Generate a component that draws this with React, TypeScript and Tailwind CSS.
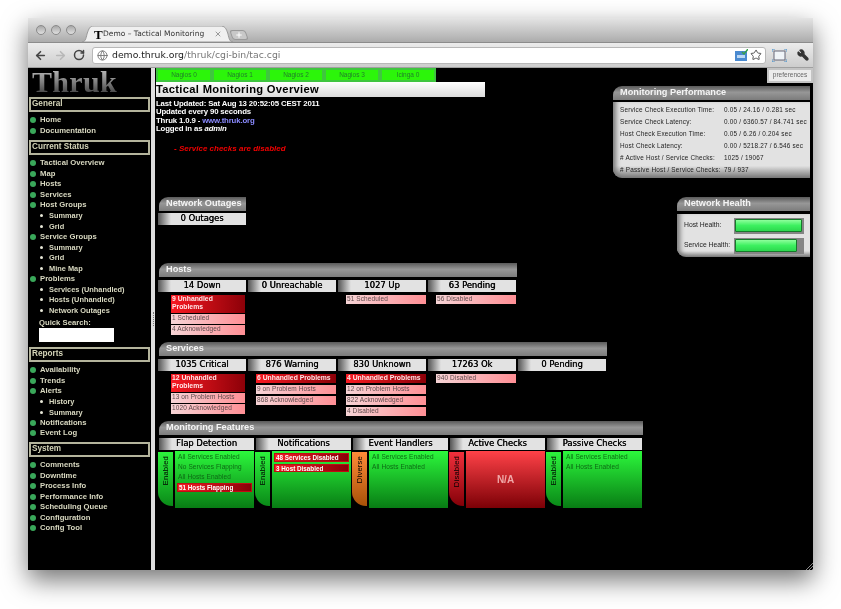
import React from "react";
import { ArrowLeft, ArrowRight, RotateCw, Globe, Star, Wrench, X, Plus } from "lucide-react";

const SANS = "font-['Liberation_Sans',Arial,sans-serif]";

type Item = { t: string; sub?: boolean };
const nav: { title: string; items: Item[]; search?: boolean; gap: string }[] = [
  { title: "General", gap: "h-[43px]", items: [{ t: "Home" }, { t: "Documentation" }] },
  {
    title: "Current Status",
    gap: "h-[207px]",
    search: true,
    items: [
      { t: "Tactical Overview" }, { t: "Map" }, { t: "Hosts" }, { t: "Services" }, { t: "Host Groups" },
      { t: "Summary", sub: true }, { t: "Grid", sub: true }, { t: "Service Groups" }, { t: "Summary", sub: true },
      { t: "Grid", sub: true }, { t: "Mine Map", sub: true }, { t: "Problems" }, { t: "Services (Unhandled)", sub: true },
      { t: "Hosts (Unhandled)", sub: true }, { t: "Network Outages", sub: true },
    ],
  },
  {
    title: "Reports",
    gap: "h-[95px]",
    items: [
      { t: "Availability" }, { t: "Trends" }, { t: "Alerts" }, { t: "History", sub: true }, { t: "Summary", sub: true },
      { t: "Notifications" }, { t: "Event Log" },
    ],
  },
  {
    title: "System",
    gap: "h-[95px]",
    items: [
      { t: "Comments" }, { t: "Downtime" }, { t: "Process Info" }, { t: "Performance Info" }, { t: "Scheduling Queue" },
      { t: "Configuration" }, { t: "Config Tool" },
    ],
  },
];

function Sidebar() {
  return (
    <aside className={`w-[123px] shrink-0 bg-black flex flex-col ${SANS}`}>
      <div className="h-[29px] pl-[4px] flex items-start">
        <span className="font-['Liberation_Serif',serif] font-bold text-[30px] leading-[28px] tracking-[0.3px] text-transparent bg-clip-text bg-gradient-to-b from-[#c0c0c0] via-[#808080] to-[#3a3a3a]">
          Thruk
        </span>
      </div>
      {nav.map((s) => (
        <div key={s.title} className={`flex flex-col ${s.gap}`}>
          <div className="mx-[1px] h-[15px] border-2 border-[#b4b49c] flex items-center pl-[1px] text-[8.2px] font-bold text-[#d4d4b8] leading-none">
            {s.title}
          </div>
          <ul className="pt-[3px] pl-[2px]">
            {s.items.map((it, i) => (
              <li key={i} className={`h-[10.5px] flex items-center font-bold text-[#d8d8c0] leading-none whitespace-nowrap ${it.sub ? "text-[7.4px] pl-[10px] gap-[6px]" : "text-[7.7px] pl-[0px] gap-[4px]"}`}>
                {it.sub ? <span className="w-[3px] h-[3px] rounded-full bg-[#e8e8d8]" /> : <span className="w-[6px] h-[6px] rounded-full bg-[#3aa85a]" />}
                <span>{it.t}</span>
              </li>
            ))}
          </ul>
          {s.search && (
            <div className="pl-[11px] pt-[1px] text-[7.7px] font-bold text-[#d8d8c0] leading-[11px]">
              Quick Search:
              <div className="w-[75px] h-[14px] bg-white" />
            </div>
          )}
        </div>
      ))}
    </aside>
  );
}

function Header({ children, w }: { children: React.ReactNode; w: string }) {
  return (
    <div className={`${w} h-[14px] rounded-tl-[9px] bg-[linear-gradient(180deg,#5a5a5a,#979797_45%,#7c7c7c)] pl-[7px] flex items-center text-[9.2px] font-bold text-[#f4f4f4] leading-none whitespace-nowrap`}>
      {children}
    </div>
  );
}

function StatHead({ children, w = "w-[88px]" }: { children: React.ReactNode; w?: string }) {
  return (
    <div className={`${w} h-[12px] bg-[linear-gradient(90deg,#555,#e2e2e2_13px)] flex items-center justify-center font-['DejaVu_Sans',sans-serif] text-[8.4px] text-black leading-none whitespace-nowrap [text-shadow:0.3px_0_0_#000]`}>
      {children}
    </div>
  );
}

type Sub = { t: string; hot?: boolean; two?: boolean };
function SubList({ items, pad, w }: { items: Sub[]; pad: string; w: string }) {
  return (
    <div className={`flex flex-col gap-[1.5px] mt-[3px] ${pad}`}>
      {items.map((s) => (
        <div
          key={s.t}
          className={`${w} ${s.two ? "h-[18px]" : "h-[9.5px]"} pl-[1px] leading-[8.5px] ${
            s.hot
              ? "bg-[linear-gradient(90deg,#f81a22,#8c0008)] font-bold text-[6.8px] text-[#ffe8e8]"
              : "bg-[linear-gradient(90deg,#f6d4d6,#ff8f95)] text-[6.5px] tracking-[0.1px] text-[#5e4a4c]"
          }`}
        >
          {s.t}
        </div>
      ))}
    </div>
  );
}

const hosts = [
  { h: "14 Down", pad: "ml-[13px]", w: "w-[74px]", items: [{ t: "9 Unhandled Problems", hot: true, two: true }, { t: "1 Scheduled" }, { t: "4 Acknowledged" }] },
  { h: "0 Unreachable", pad: "", w: "", items: [] },
  { h: "1027 Up", pad: "ml-[8px]", w: "w-[80px]", items: [{ t: "51 Scheduled" }] },
  { h: "63 Pending", pad: "ml-[8px]", w: "w-[80px]", items: [{ t: "56 Disabled" }] },
];
const services = [
  { h: "1035 Critical", pad: "ml-[13px]", w: "w-[74px]", items: [{ t: "12 Unhandled Problems", hot: true, two: true }, { t: "13 on Problem Hosts" }, { t: "1020 Acknowledged" }] },
  { h: "876 Warning", pad: "ml-[8px]", w: "w-[80px]", items: [{ t: "6 Unhandled Problems", hot: true }, { t: "9 on Problem Hosts" }, { t: "868 Acknowledged" }] },
  { h: "830 Unknown", pad: "ml-[8px]", w: "w-[80px]", items: [{ t: "4 Unhandled Problems", hot: true }, { t: "12 on Problem Hosts" }, { t: "822 Acknowledged" }, { t: "4 Disabled" }] },
  { h: "17263 Ok", pad: "ml-[8px]", w: "w-[80px]", items: [{ t: "940 Disabled" }] },
  { h: "0 Pending", pad: "", w: "", items: [] },
];

type Feature = { h: string; tab: string; tone: "g" | "o" | "r"; lines: Sub[]; na?: boolean };
const features: Feature[] = [
  { h: "Flap Detection", tab: "Enabled", tone: "g", lines: [{ t: "All Services Enabled" }, { t: "No Services Flapping" }, { t: "All Hosts Enabled" }, { t: "51 Hosts Flapping", hot: true }] },
  { h: "Notifications", tab: "Enabled", tone: "g", lines: [{ t: "48 Services Disabled", hot: true }, { t: "3 Host Disabled", hot: true }] },
  { h: "Event Handlers", tab: "Diverse", tone: "o", lines: [{ t: "All Services Enabled" }, { t: "All Hosts Enabled" }] },
  { h: "Active Checks", tab: "Disabled", tone: "r", lines: [], na: true },
  { h: "Passive Checks", tab: "Enabled", tone: "g", lines: [{ t: "All Services Enabled" }, { t: "All Hosts Enabled" }] },
];

function FeatureCol({ f }: { f: Feature }) {
  const tabBg =
    f.tone === "g"
      ? "bg-[linear-gradient(180deg,#2cf23c,#0a8a18)]"
      : f.tone === "o"
      ? "bg-[linear-gradient(180deg,#ff8a38,#a85208)]"
      : "bg-[linear-gradient(180deg,#f0303c,#840008)]";
  return (
    <div className="w-[95px] flex flex-col">
      <StatHead w="w-[95px]">{f.h}</StatHead>
      <div className="flex gap-[2px] mt-[1px]">
        <div className={`w-[15px] -ml-[1px] h-[54px] mt-[1px] pt-[4px] rounded-bl-[14px] flex items-start justify-center ${tabBg}`}>
          <span className="[writing-mode:vertical-rl] rotate-180 text-[7.6px] leading-none text-black tracking-[0.2px]">{f.tab}</span>
        </div>
        {f.na ? (
          <div className="w-[79px] h-[57px] bg-[linear-gradient(180deg,#ff4248,#7c0006)] flex items-center justify-center text-[10px] font-bold text-[#f0a8a8]">
            N/A
          </div>
        ) : (
          <div className="w-[79px] h-[57px] bg-[linear-gradient(180deg,#2cf83c,#087c14)] pt-[2px] px-[2px] flex flex-col gap-[1.5px]">
            {f.lines.map((l) =>
              l.hot ? (
                <div key={l.t} className="h-[8.5px] mt-[0.5px] border border-[#c00c14] bg-[linear-gradient(90deg,#f41c24,#880008)] text-[6.3px] font-bold text-white leading-[7px] pl-[1px] whitespace-nowrap">
                  {l.t}
                </div>
              ) : (
                <div key={l.t} className="h-[8.5px] pl-[1px] text-[6.5px] leading-[8.5px] tracking-[0.1px] text-[#0d6a14] whitespace-nowrap">
                  {l.t}
                </div>
              )
            )}
          </div>
        )}
      </div>
    </div>
  );
}

const perf = [
  ["Service Check Execution Time:", "0.05 / 24.16 / 0.281 sec"],
  ["Service Check Latency:", "0.00 / 6360.57 / 84.741 sec"],
  ["Host Check Execution Time:", "0.05 / 6.26 / 0.204 sec"],
  ["Host Check Latency:", "0.00 / 5218.27 / 6.546 sec"],
  ["# Active Host / Service Checks:", "1025 / 19067"],
  ["# Passive Host / Service Checks:", "79 / 937"],
];

function RightPanels() {
  return (
    <div className="w-[198px] flex flex-col items-end mt-[4px] mr-[3px] shrink-0">
      <Header w="w-[197px]">Monitoring Performance</Header>
      <div className="w-[197px] h-[76px] mt-[2px] rounded-bl-[9px] bg-[linear-gradient(180deg,#e2e2e2_84%,#777)] pt-[2px] pl-[7px] text-[6.4px] tracking-[0.2px] text-[#222] leading-none shadow-[inset_6px_0_5px_-3px_#777]">
        {perf.map(([a, b]) => (
          <div key={a} className="h-[12px] flex items-center whitespace-nowrap">
            <span className="w-[104px] shrink-0">{a}</span>
            <span>{b}</span>
          </div>
        ))}
      </div>
      <div className="h-[19px]" />
      <Header w="w-[133px]">Network Health</Header>
      <div className="w-[133px] h-[43px] mt-[3px] rounded-bl-[9px] bg-[linear-gradient(180deg,#e2e2e2_86%,#777)] pt-[4px] pl-[7px] text-[6.8px] text-[#222] leading-none shadow-[inset_6px_0_5px_-3px_#777]">
        {[["Host Health:", "w-[67px]"], ["Service Health:", "w-[62px]"]].map(([l, w]) => (
          <div key={l} className="h-[20px] flex items-start">
            <span className="w-[50px] pt-[4px] shrink-0 whitespace-nowrap">{l}</span>
            <div className="w-[70px] h-[16px] bg-[#858585] p-[1px]">
              <div className={`${w} h-[13px] rounded-[1px] border border-[#157a2a] bg-[linear-gradient(180deg,#8dff9c,#3df060_50%,#2cd84e)]`} />
            </div>
          </div>
        ))}
      </div>
    </div>
  );
}

function Main() {
  return (
    <main className={`flex-1 min-w-0 bg-black flex flex-col ${SANS}`}>
      <div className="h-[14px] flex items-start justify-between pl-[1px]">
        <div className="flex">
          {["Nagios 0", "Nagios 1", "Nagios 2", "Nagios 3", "Icinga 0"].map((t) => (
            <div key={t} className="w-[56px] h-[14px] border-[2px] border-[#3fc63f] bg-[#2cf50a] flex items-center justify-center text-[6.5px] text-[#22802a] leading-none">
              {t}
            </div>
          ))}
        </div>
        <div className="relative z-10 w-[46px] h-[15px] border-[2px] border-[#c4c4c4] bg-[#ececec] flex items-center justify-center text-[6.5px] text-[#666] leading-none">
          preferences
        </div>
      </div>
      <div className="flex-1 flex justify-between">
        <div className="w-[457px] shrink-0 pl-[1px] flex flex-col">
          <h1 className="w-[329px] h-[15px] bg-[linear-gradient(180deg,#ffffff,#dcdcdc)] flex items-center text-[11.2px] tracking-[0.3px] font-bold text-black leading-none whitespace-nowrap">
            Tactical Monitoring Overview
          </h1>
          <div className="mt-[3px] text-[7.8px] tracking-[-0.14px] leading-[8.4px] font-bold text-white whitespace-nowrap">
            <div>Last Updated: Sat Aug 13 20:52:05 CEST 2011</div>
            <div>Updated every 90 seconds</div>
            <div>
              Thruk 1.0.9 - <span className="text-[#8a8aff]">www.thruk.org</span>
            </div>
            <div>
              Logged in as <i>admin</i>
            </div>
          </div>
          <div className="mt-[10px] ml-[18px] text-[8px] leading-[9px] font-bold italic text-[#f00000]">- Service checks are disabled</div>
          <div className="ml-[3px] mt-[44px] flex flex-col">
            <Header w="w-[87px]">Network Outages</Header>
            <div className="-ml-[1px] mt-[2px]"><StatHead>0 Outages</StatHead></div>
          </div>
          <div className="ml-[2px] mt-[38px] flex flex-col">
            <div className="ml-[1px]"><Header w="w-[358px]">Hosts</Header></div>
            <div className="flex gap-[2px] mt-[3px] h-[62px]">
              {hosts.map((c) => (
                <div key={c.h} className="w-[88px]">
                  <StatHead>{c.h}</StatHead>
                  <SubList items={c.items} pad={c.pad} w={c.w} />
                </div>
              ))}
            </div>
          </div>
          <div className="ml-[2px] flex flex-col">
            <div className="ml-[1px]"><Header w="w-[448px]">Services</Header></div>
            <div className="flex gap-[2px] mt-[3px] h-[62px]">
              {services.map((c) => (
                <div key={c.h} className="w-[88px]">
                  <StatHead>{c.h}</StatHead>
                  <SubList items={c.items} pad={c.pad} w={c.w} />
                </div>
              ))}
            </div>
          </div>
          <div className="ml-[3px] flex flex-col">
            <Header w="w-[484px]">Monitoring Features</Header>
            <div className="flex gap-[2px] mt-[3px]">
              {features.map((f) => (
                <FeatureCol key={f.h} f={f} />
              ))}
            </div>
          </div>
        </div>
        <RightPanels />
      </div>
    </main>
  );
}

function TitleBar() {
  return (
    <div className="h-[25px] bg-[linear-gradient(180deg,#e4e4e4,#acacac)] border-b border-[#8c8c8c] flex items-end relative">
      <div className="flex gap-[5px] items-center self-start mt-[7px] ml-[8px]">
        {[0, 1, 2].map((i) => (
          <span key={i} className="w-[10px] h-[10px] rounded-full border border-[#8a8a8a] bg-[linear-gradient(180deg,#a8a8a8,#e0e0e0)]" />
        ))}
      </div>
      <div className="ml-[6px] w-[152px] h-[16px] relative flex items-center pl-[12px]">
        <svg className="absolute inset-0" width="152" height="16" viewBox="0 0 152 16">
          <path d="M0 16 C3 16 4 13 5 8 C7 2 8 0 12 0 H138 C143 0 144 2 146 8 C147 13 148 16 151 16 Z" fill="#f0f0f0" stroke="#9a9a9a" />
        </svg>
        <span className="relative font-['Liberation_Serif',serif] font-bold text-[13px] leading-none text-black w-[9px]">T</span>
        <span className="relative font-['DejaVu_Sans',sans-serif] text-[7.5px] text-[#333] whitespace-nowrap w-[105px]">
          Demo – Tactical Monitoring
        </span>
        <X size={8} strokeWidth={3} className="relative ml-[6px] text-[#999]" />
      </div>
      <div className="-ml-[3px] w-[16px] h-[10px] mb-[2px] rounded-[3px] skew-x-[20deg] border border-[#999] bg-[#c8c8c8] flex items-center justify-center">
        <Plus size={8} strokeWidth={3} className="text-white -skew-x-[20deg]" />
      </div>
    </div>
  );
}

function Toolbar() {
  return (
    <div className="h-[25px] bg-[linear-gradient(180deg,#ececec,#cdcdcd)] border-b border-[#a0a0a0] flex items-center pl-[6px] pr-[4px]">
      <ArrowLeft size={13} strokeWidth={3} className="text-[#444]" />
      <ArrowRight size={13} strokeWidth={3} className="ml-[7px] text-[#b8b8b8]" />
      <RotateCw size={12} strokeWidth={3} className="ml-[6px] text-[#444]" />
      <div className="ml-[7px] w-[674px] h-[17px] rounded-[3px] bg-white border border-[#b8b8b8] flex items-center pl-[4px] pr-[3px]">
        <Globe size={11} className="text-[#777]" />
        <span className="ml-[4px] font-['DejaVu_Sans',sans-serif] text-[9.3px] leading-none whitespace-nowrap">
          <span className="text-[#222]">demo.thruk.org</span>
          <span className="text-[#777]">/thruk/cgi-bin/tac.cgi</span>
        </span>
        <span className="ml-auto flex items-center gap-[2px]">
          <svg width="13" height="12" viewBox="0 0 13 12">
            <rect x="0" y="2" width="12" height="10" fill="#4a8ad0" />
            <rect x="2" y="6" width="8" height="3" fill="#bcd8f4" />
            <path d="M7 3 L9 5 L13 0" fill="none" stroke="#38a048" strokeWidth="1.5" />
          </svg>
          <Star size={12} className="text-[#555]" />
        </span>
      </div>
      <svg className="ml-[6px]" width="15" height="13" viewBox="0 0 15 13">
        <rect x="2" y="2" width="11" height="9" fill="#f0f4f8" stroke="#667" strokeWidth="1" />
        <path d="M0 3V0H3M12 0H15V3M15 10V13H12M3 13H0V10" fill="none" stroke="#4a90c8" strokeWidth="1" />
      </svg>
      <Wrench size={12} strokeWidth={2.5} fill="currentColor" className="ml-[10px] text-[#333] -scale-x-100" />
    </div>
  );
}

export default function App() {
  return (
    <div className="w-[841px] h-[609px] bg-white pt-[18px] pl-[28px] overflow-hidden">
      <div className="relative w-[785px] h-[552px] flex flex-col blur-[0.35px] shadow-[0_10px_24px_rgba(0,0,0,0.55)]">
        <TitleBar />
        <Toolbar />
        <div className="flex-1 min-h-0 flex overflow-hidden">
          <Sidebar />
          <div className="w-[4px] shrink-0 bg-[#dedede] flex items-center justify-center">
            <div className="w-[1px] h-[14px] border-l border-dotted border-[#777]" />
          </div>
          <Main />
        </div>
        <svg className="absolute right-0 bottom-0" width="8" height="8" viewBox="0 0 8 8">
          <path d="M8 1 L1 8 M8 4 L4 8 M8 7 L7 8" stroke="#888" strokeWidth="1" />
        </svg>
      </div>
    </div>
  );
}
